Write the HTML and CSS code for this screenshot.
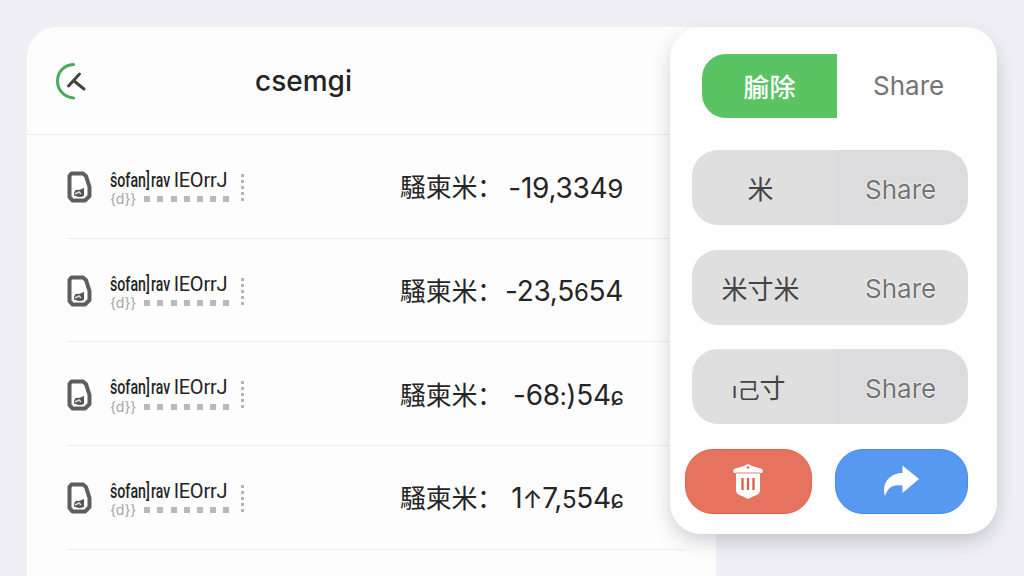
FILE: index.html
```
<!DOCTYPE html>
<html lang="zh">
<head>
  <meta charset="UTF-8">
  <meta name="viewport" content="width=device-width, initial-scale=1.0">
  <title>csemgi</title>
  <link rel="stylesheet" href="styles.css">
</head>
<body>
  <div class="list-card">
    <header class="header">
      <svg class="back" width="34" height="40" viewBox="0 0 34 40" fill="none" stroke-linecap="round">
        <path d="M18.500 3.500C9 4 2.500 11 2.500 20S9 36 18.500 37" stroke="#43ad58" stroke-width="3"/>
        <path d="M13.500 25L24.500 13M18.500 19.500L29 28" stroke="#45443f" stroke-width="3"/>
      </svg>
      <h1>csemgi</h1>
    </header>

    <!-- Record rows -->
    <ul class="rows" id="rows"></ul>
  </div>

  <!-- Actions popover -->
  <div class="popover">
    <div class="option top">
      <span class="label green">腧除</span>
      <span class="share">Share</span>
    </div>
    <div class="option pill split">
      <span class="label">米</span>
      <span class="share">Share</span>
    </div>
    <div class="option pill">
      <span class="label">米寸米</span>
      <span class="share">Share</span>
    </div>
    <div class="option pill split">
      <span class="label short"><small>ı己</small>寸</span>
      <span class="share">Share</span>
    </div>
    <div class="actions">
      <button class="delete" aria-label="Delete">
        <svg width="32" height="38" viewBox="0 0 32 38">
          <path d="M1 8.500Q2 6 5 6L12 4Q16 .5 20 4L27 6Q30 6 31 8.500L30 11H28V29Q27 33 22 34L16 37L10 34Q5 33 4 29V11H2Z" fill="#fff"/>
          <path d="M4 11H28" stroke="#e9a18f" stroke-width="1.300"/>
          <path d="M10.500 16V28M16 16V28M21.500 16V28" stroke="#d9604c" stroke-width="2.300"/>
          <circle cx="16" cy="5.500" r="1.300" fill="#e36d58"/>
        </svg>
      </button>
      <button class="forward" aria-label="Share">
        <svg width="38" height="34" viewBox="0 0 38 34">
          <path d="M20.500 1.500L37 15L20.500 29V21.500C11 20 6 23 3 32C-1 19 8 9 20.500 9Z" fill="#fff"/>
        </svg>
      </button>
    </div>
  </div>

  <script>
    const records = [
      { amount: '-19,334', tail: '9', tailClass: 'nine' },
      { amount: '-23,5<i>6</i>54', tail: '', tailClass: '' },
      { amount: '-68<i>:</i>)54', tail: 'ɕ', tailClass: 'curl' },
      { amount: '1<i>↑</i>7,<i>5</i>54', tail: 'ɕ', tailClass: 'curl' }
    ];

    // Build each row of the list
    document.getElementById('rows').innerHTML = records.map(record => `
      <li class="row">
        <svg class="file-icon" width="25" height="32" viewBox="0 0 25 32">
          <path d="M4.500 2.500H16L19 5L22.500 16V25L18 29.500H5.500L2.500 26V5Z" fill="#fff" stroke="#5e5e5e" stroke-width="4" stroke-linejoin="round"/>
          <path d="M7 24.500Q6.500 18 12 19L17 17V25Q12 27 7 24.500Z" fill="#555"/>
          <path d="M8 23L12 21L14 23" fill="none" stroke="#ddd" stroke-width="1.500"/>
        </svg>
        <div class="info">
          <div class="name"><span class="n1">ŝofan]</span><span class="n2">rav</span><span class="n3">lEOrrJ</span></div>
          <div class="meta"><span>{d}}</span><i></i><i></i><i></i><i></i><i></i><i></i><i></i></div>
        </div>
        <div class="more"><i></i><i></i><i></i><i></i><i></i></div>
        <span class="kind">騷柬米：</span>
        <span class="amount">${record.amount}<span class="${record.tailClass}">${record.tail}</span></span>
      </li>`).join('');
  </script>
</body>
</html>
```
FILE: styles.css
```
* {
  box-sizing: border-box;
}

body {
  margin: 0;
  width: 1024px;
  height: 576px;
  overflow: hidden;
  position: relative;
  padding: 27px 0 0 27px;
  background: #efeff5;
  font-family: Inter, "Noto Sans CJK SC", sans-serif;
  color: #252525;
}

/* List */
.list-card {
  width: 689px;
  height: 549px;
  background: #fdfdfd;
  border-radius: 30px 0 0 0;
  overflow: hidden;
}

.header {
  height: 108px;
  border-bottom: 1px solid #ececee;
  display: flex;
  align-items: center;
  padding-left: 28px;
}

h1 {
  margin: 0 0 0 166px;
  font-size: 28px;
  font-weight: 500;
  line-height: 40px;
}

.rows {
  list-style: none;
  margin: 0;
  padding: 0 31px 0 40px;
}

.row {
  height: 103.7px;
  padding-top: 2px;
  border-bottom: 1.5px solid #ececec;
  display: flex;
  align-items: center;
}

.info {
  width: 120px;
  margin-left: 18px;
  padding-top: 2px;
}

.name {
  display: flex;
  height: 22px;
  font-family: Roboto, sans-serif;
  font-size: 20px;
  line-height: 20px;
  white-space: nowrap;
}

.n1,
.n2 {
  font-weight: 500;
  transform-origin: left;
}

.n1 {
  width: 41px;
  transform: scaleX(0.71);
}

.n2 {
  width: 23px;
  transform: scaleX(0.7);
}

.n3 {
  letter-spacing: -0.2px;
}

.meta {
  display: flex;
  align-items: center;
  gap: 7.2px;
  height: 15px;
  color: #a5a5a5;
  font-size: 14px;
  line-height: 14px;
}

.meta span {
  width: 27px;
}

.meta i {
  width: 6px;
  height: 6px;
  background: #b9b9b9;
}

.more {
  display: flex;
  flex-direction: column;
  gap: 3px;
  margin-left: 11px;
}

.more i {
  width: 3px;
  height: 3px;
  background: #b5b5b5;
}

.kind {
  width: 101px;
  margin-left: 156px;
  font-family: "Noto Sans CJK JP", sans-serif;
  font-size: 26px;
  letter-spacing: -0.3px;
  line-height: 36px;
  margin-top: -2px;
  white-space: nowrap;
}

.amount {
  flex: 1;
  margin-right: 62px;
  padding-top: 2px;
  text-align: right;
  font-size: 28px;
  letter-spacing: -0.3px;
  line-height: 36px;
  white-space: nowrap;
}

.amount i {
  font-style: normal;
  font-size: 24px;
}

.nine {
  font-size: 26px;
}

.curl {
  font-size: 25px;
}

/* Popover */
.popover {
  position: absolute;
  left: 670px;
  top: 27px;
  width: 327px;
  height: 507px;
  padding: 27px 29px 20px 22px;
  background: #fefefe;
  border-radius: 31px;
  box-shadow: 0 8px 20px -2px rgba(40, 40, 65, 0.23);
}

.option {
  display: flex;
  align-items: center;
}

.top {
  height: 64px;
  margin: 0 0 32px 10px;
}

.label {
  width: 137px;
  text-align: center;
  font-family: "Noto Sans CJK SC", sans-serif;
  font-size: 26px;
  color: #444;
}

.green {
  width: 135px;
  height: 64px;
  line-height: 64px;
  border-radius: 24px 0 0 24px;
  background: #5ac463;
  color: #fff;
  font-weight: 500;
}

.share {
  margin-left: 36px;
  font-size: 26px;
  line-height: 30px;
  color: #747474;
}

.pill {
  height: 75px;
  margin-bottom: 24.5px;
  border-radius: 26px;
  background: #dfdfdf;
}

.pill .share {
  padding-top: 4px;
  text-shadow: 0 0 2px #fff, 0 0 2px #fff;
}

.split {
  background: linear-gradient(90deg, #dfdfdf 50%, #dcdcde 52%);
}

.short {
  padding-right: 4px;
}

.short small {
  font-size: 22px;
}

/* Bottom buttons */
.actions {
  display: flex;
  gap: 23px;
  margin-left: -7px;
}

.actions button {
  height: 65px;
  border: 0;
  border-radius: 28px;
  padding: 0;
  display: flex;
  align-items: center;
  justify-content: center;
}

.actions .delete {
  width: 127px;
  background: #e57360;
  border: 1px solid #e2634f;
}

.actions .forward {
  width: 134px;
  background: #5798f0;
  border: 1px solid #478bec;
}
```
